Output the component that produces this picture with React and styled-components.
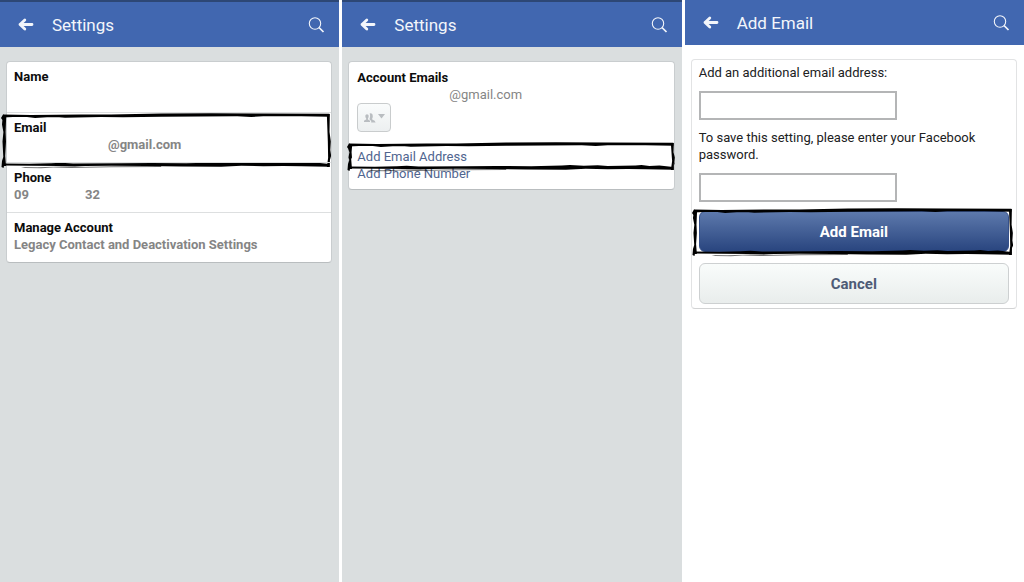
import React from "react";
import styled, { createGlobalStyle } from "styled-components";

const GlobalStyle = createGlobalStyle`
  * {
    box-sizing: border-box;
  }
  body {
    margin: 0;
    background: #ffffff;
    font-family: Roboto, "Liberation Sans", sans-serif;
    font-size: 13px;
    line-height: 17px;
    color: #0c0c0c;
  }
`;

const Screens = styled.main`
  display: grid;
  grid-template-columns: repeat(3, 1fr);
  gap: 3px;
  min-height: 100vh;
`;

const Screen = styled.section`
  min-width: 0;
  background: ${(props) => (props.$plain ? "#ffffff" : "#dadedf")};
`;

const Header = styled.header`
  display: flex;
  align-items: center;
  height: ${(props) => (props.$statusBar ? "47px" : "45px")};
  padding: 0 14px 0 16px;
  border-top: ${(props) => (props.$statusBar ? "2px solid #2d4775" : "none")};
  background: #4167b0;
  color: #f3f6fb;
`;

const Title = styled.h1`
  flex: 1;
  margin: 0 0 0 16px;
  font-size: 17px;
  line-height: 24px;
  font-weight: 400;
`;

const IconButton = styled.button`
  display: flex;
  padding: 0;
  border: none;
  background: none;
  color: inherit;
`;

const Card = styled.div`
  margin: 14px 7px 14px 6px;
  border: 1px solid ${(props) => (props.$plain ? "#e2e3e4" : "#c9cdcf")};
  border-bottom-color: ${(props) => (props.$plain ? "#d2d3d4" : "#b9bdbf")};
  border-radius: 4px;
  background: #ffffff;
`;

const Row = styled.div`
  position: relative;
  height: 50px;
  padding: 6px 7px;
  & + & {
    border-top: 1px solid #dddfe0;
  }
`;

const Label = styled.h2`
  margin: 0;
  font-size: 13px;
  line-height: 17px;
  font-weight: 700;
`;

const Value = styled.p`
  display: flex;
  gap: ${(props) => props.$gap || "0"};
  margin: 0;
  padding-left: ${(props) => props.$indent || "0"};
  color: #858585;
  font-weight: ${(props) => (props.$light ? 400 : 700)};
`;

const Emails = styled.div`
  padding: 7px 8px;
`;

const AudienceButton = styled.button`
  display: flex;
  align-items: center;
  justify-content: center;
  gap: 2px;
  width: 34px;
  height: 29px;
  margin: 0 0 16px;
  padding: 0;
  border: 1px solid #c9cccd;
  border-radius: 4px;
  background: linear-gradient(#fafcfc, #eceff0);
  color: #b9bdc1;
`;

const Highlighted = styled.div`
  position: relative;
`;

const Link = styled.a`
  display: block;
  color: #50658f;
  text-decoration: none;
`;

const Form = styled.form`
  display: flex;
  flex-direction: column;
  align-items: flex-start;
  padding: 4px 7px;
  color: #202122;
`;

const Input = styled.input`
  width: 198px;
  height: 29px;
  margin: 10px 0 9px;
  padding: 4px;
  border: 2px solid #b4b5b6;
  background: #ffffff;
  font: inherit;
`;

const ButtonSlot = styled.div`
  position: relative;
  width: 100%;
  margin-bottom: 11px;
  &:last-child {
    margin-bottom: 0;
  }
`;

const Button = styled.button`
  display: block;
  width: 100%;
  height: 41px;
  padding: 0;
  border: 1px solid ${(props) => (props.$primary ? "#35508a" : "#cdd0d1")};
  border-radius: 6px;
  background: ${(props) =>
    props.$primary
      ? "linear-gradient(#5d79ac, #29457f)"
      : "linear-gradient(#f9fcfb, #e9edec)"};
  color: ${(props) => (props.$primary ? "#ffffff" : "#4e5b76")};
  font-family: inherit;
  font-size: 15px;
  font-weight: 700;
`;

const Sketch = styled.svg`
  position: absolute;
  top: ${(props) => props.$top};
  left: ${(props) => props.$left};
  width: calc(100% + ${(props) => props.$extra});
  height: ${(props) => props.$height};
  pointer-events: none;
`;

// rough ink box, the edges keep their thickness whatever the height
const SketchFrame = ({ top, left, extra, height }) => {
  const bottom = height - 8;
  return (
    <Sketch
      $top={top}
      $left={left}
      $extra={extra}
      $height={`${height}px`}
      viewBox={`0 0 330 ${height}`}
      preserveAspectRatio="none"
      aria-hidden="true"
    >
      <path d="M2 1.5L30 2L80 1.500L110 1.400L160 .6L210 .2L260 .6L328 .8V3.800L300 3.200L262 3.300L250 4L236 3.300L160 3.800L122 4.300L100 4L64 4.800L58 4.200L46 4.300L34 5L26 4L12 4L2 4.500Z" />
      <path
        transform={`translate(0 ${bottom})`}
        d="M1 1.500L28 1.800L50 1.300L60 .8L72 1.600L120 1.300L150 1L185 1.200L216 .6L224 0L238 .8L252 .2L262 1L290 .6L296 0L304 1L314 .6L328 2V4.800L300 4.300L282 4L262 4.200L240 3.800L220 4.800L180 4.500L145 4L110 3.800L84 4L74 4.600L58 4L30 3.800L2 3.600Z"
      />
      <path
        transform={`translate(0 ${bottom})`}
        d="M20 5L36 5.300L60 4.600L75 4.900L110 4.300L160 4V5L110 5.300L70 6.100L52 5.600L40 6.300L24 6Z"
        opacity="0.55"
      />
      <path
        d={`M2 1.500L5.200 3L4.600 ${height / 3}L5 ${height / 2}L4.200 ${
          height - 14
        }L5 ${height - 4}L3 ${height - 4}L2.500 ${height - 2}L.5 ${
          height - 3
        }L1 ${height - 9}L2.300 ${height - 13}L1.500 ${height / 2}L2.400 ${
          height / 3
        }L1 ${height / 5}L1.400 7L0 5Z`}
      />
      <path
        d={`M325.500 1H328.500L328.200 ${height / 3}L329.500 ${
          height / 2
        }L329 ${height * 0.65}L329.800 ${height * 0.75}L328.600 ${
          height - 10
        }L328.500 ${height - 3}H325.500L326.800 ${height - 12}L326.500 ${
          height / 2
        }Z`}
      />
    </Sketch>
  );
};

const BackIcon = () => (
  <svg width="20" height="18" viewBox="0 0 20 18" fill="none">
    <path
      d="M16 8.500H4M8.800 4L4 8.500L8.800 13"
      stroke="currentColor"
      strokeWidth="2.800"
      strokeLinecap="round"
      strokeLinejoin="round"
    />
  </svg>
);

const SearchIcon = () => (
  <svg width="18" height="18" viewBox="0 0 18 18" fill="none">
    <circle cx="8" cy="7.500" r="5.700" stroke="currentColor" strokeWidth="1.100" />
    <path d="M12 11.500L16.500 16" stroke="currentColor" strokeWidth="1.700" />
  </svg>
);

const FriendsIcon = () => (
  <svg width="12" height="10" viewBox="0 0 12 10" fill="currentColor">
    <path d="M0 9V8Q0 7.200 2.200 6.400V5.400Q1.200 4.500 1.300 2.800Q1.500 1.200 3 1.200Q4.600 1.200 4.700 2.800Q4.800 4.500 3.900 5.400V6.400Q6 7.200 6 8V9Z" />
    <path d="M5.600 .6Q8.800 -.4 8.800 3Q8.800 4.600 8.200 5.400V6.500Q11.400 7.400 11.600 9.500H7.200V8L5.600 6.400V5.400Q6.600 3 5.600 .6Z" />
  </svg>
);

const CaretIcon = () => (
  <svg width="7" height="7" viewBox="0 0 7 7" fill="currentColor">
    <path d="M0 0H7L3.500 4.500Z" />
  </svg>
);

const TopBar = ({ title, statusBar }) => (
  <Header $statusBar={statusBar}>
    <IconButton type="button" aria-label="Back">
      <BackIcon />
    </IconButton>
    <Title>{title}</Title>
    <IconButton type="button" aria-label="Search">
      <SearchIcon />
    </IconButton>
  </Header>
);

const App = () => {
  return (
    <>
      <GlobalStyle />
      <Screens>
        <Screen>
          <TopBar title="Settings" statusBar />
          <Card>
            <Row>
              <Label>Name</Label>
            </Row>
            <Row>
              <Label>Email</Label>
              <Value $indent="94px">@gmail.com</Value>
              <SketchFrame top="0" left="-6px" extra="6px" height={57} />
            </Row>
            <Row>
              <Label>Phone</Label>
              <Value $gap="56px">
                <span>09</span>
                <span>32</span>
              </Value>
            </Row>
            <Row>
              <Label>Manage Account</Label>
              <Value>Legacy Contact and Deactivation Settings</Value>
            </Row>
          </Card>
        </Screen>

        <Screen>
          <TopBar title="Settings" statusBar />
          <Card>
            <Emails>
              <Label>Account Emails</Label>
              <Value $light $indent="92px">
                @gmail.com
              </Value>
              <AudienceButton type="button" aria-label="Audience">
                <FriendsIcon />
                <CaretIcon />
              </AudienceButton>
              <Highlighted>
                <Link href="#email">Add Email Address</Link>
                <SketchFrame top="-6px" left="-10px" extra="20px" height={31} />
              </Highlighted>
              <Link href="#phone">Add Phone Number</Link>
            </Emails>
          </Card>
        </Screen>

        <Screen $plain>
          <TopBar title="Add Email" />
          <Card $plain>
            <Form onSubmit={(ev) => ev.preventDefault()}>
              <label htmlFor="email">Add an additional email address:</label>
              <Input id="email" type="email" />
              <label htmlFor="password">
                To save this setting, please enter your Facebook password.
              </label>
              <Input id="password" type="password" />
              <ButtonSlot>
                <Button type="submit" $primary>
                  Add Email
                </Button>
                <SketchFrame top="-3px" left="-7px" extra="11px" height={50} />
              </ButtonSlot>
              <ButtonSlot>
                <Button type="button">Cancel</Button>
              </ButtonSlot>
            </Form>
          </Card>
        </Screen>
      </Screens>
    </>
  );
};

export default App;
